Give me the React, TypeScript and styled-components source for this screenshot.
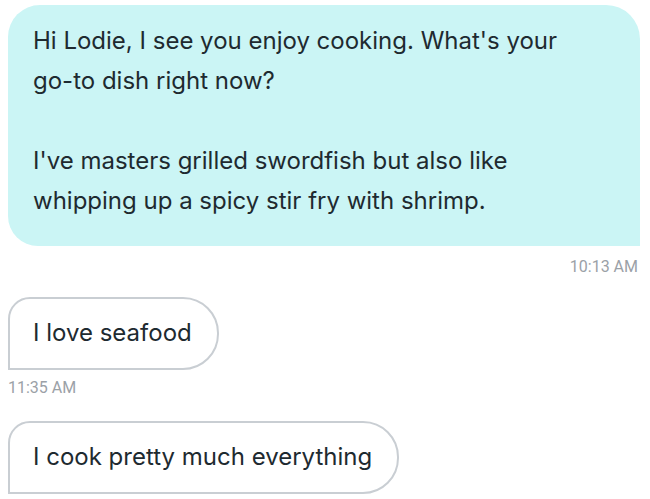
import React from "react";
import styled, { createGlobalStyle } from "styled-components";

const GlobalStyle = createGlobalStyle`
  html, body { margin: 0; padding: 0; background: #ffffff; }
  body { font-family: "Inter", "Noto Sans", sans-serif; }
`;

const Thread = styled.div`
  display: flex;
  flex-direction: column;
  padding: 5px 10px 0 8px;
`;

const Group = styled.div<{ $mine?: boolean }>`
  display: flex;
  flex-direction: column;
  align-items: ${(p) => (p.$mine ? "stretch" : "flex-start")};
`;

const IncomingBubble = styled.div`
  background: #cbf5f5;
  color: #1e2a30;
  border-radius: 32px 34px 0 30px;
  padding: 16px 25px 25px 25px;
  font-size: 24px;
  line-height: 40px;
`;

const Paragraph = styled.p`
  margin: 0;
  & + & { margin-top: 40px; }
`;

const OutgoingBubble = styled.div`
  background: #ffffff;
  color: #1e2a30;
  border: 2px solid #c9ced3;
  border-radius: 22px 36px 36px 0;
  padding: 14px 25px 15px 23px;
  font-size: 24px;
  line-height: 40px;
  white-space: nowrap;
`;

const Time = styled.div<{ $right?: boolean; $top: number; $bottom: number }>`
  font-family: "Roboto", "Liberation Sans", sans-serif;
  font-size: 16px;
  line-height: 20px;
  color: #9ba1a7;
  text-align: ${(p) => (p.$right ? "right" : "left")};
  align-self: ${(p) => (p.$right ? "flex-end" : "flex-start")};
  margin: ${(p) => p.$top}px ${(p) => (p.$right ? 2 : 0)}px ${(p) => p.$bottom}px 0;
`;

export default function App() {
  return (
    <>
      <GlobalStyle />
      <Thread>
        <Group $mine>
          <IncomingBubble>
            <Paragraph>
              Hi Lodie, I see you enjoy cooking. What's your
              <br />
              go-to dish right now?
            </Paragraph>
            <Paragraph>
              I've masters grilled swordfish but also like
              <br />
              whipping up a spicy stir fry with shrimp.
            </Paragraph>
          </IncomingBubble>
          <Time $right $top={11} $bottom={20}>10:13 AM</Time>
        </Group>
        <Group>
          <OutgoingBubble>I love seafood</OutgoingBubble>
          <Time $top={8} $bottom={23}>11:35 AM</Time>
        </Group>
        <Group>
          <OutgoingBubble>I cook pretty much everything</OutgoingBubble>
        </Group>
      </Thread>
    </>
  );
}
